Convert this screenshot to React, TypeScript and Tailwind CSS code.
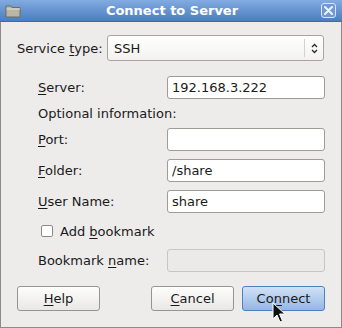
import { ReactNode } from 'react';

function Mn({ children }: { children: ReactNode }) {
  return <span className="underline underline-offset-2 decoration-1">{children}</span>;
}

function Field({ label, value, disabled }: { label: ReactNode; value?: string; disabled?: boolean }) {
  return (
    <div className="flex items-center h-[23px]">
      <div className="w-[166px] pl-[37px] whitespace-nowrap">{label}</div>
      <div
        className={`w-[158px] h-[23px] rounded-[3px] border flex items-center px-[4px] ${
          disabled ? 'bg-[#ebeae8] border-[#c8c6c2]' : 'bg-white border-[#9f9b96]'
        }`}
      >
        {value}
      </div>
    </div>
  );
}

function Btn({ children, primary, className }: { children: ReactNode; primary?: boolean; className?: string }) {
  return (
    <div
      className={`w-[83px] h-[25px] rounded-[3px] border flex items-center justify-center ${
        primary
          ? 'border-[#4d7fc1] bg-gradient-to-b from-[#d2e2f6] to-[#94b6e3]'
          : 'border-[#979591] bg-gradient-to-b from-[#fdfdfc] to-[#e9e8e6]'
      } ${className ?? ''}`}
    >
      {children}
    </div>
  );
}

export default function App() {
  return (
    <div className="relative w-[342px] h-[328px] bg-[#edeceb] text-[13px] text-[#1a1a1a] font-['DejaVu_Sans',sans-serif] leading-none select-none">
      {/* Title bar */}
      <div className="h-[22px] bg-gradient-to-b from-[#82abe0] to-[#4b7dc0] border-b border-[#3f6ca8] flex items-center pl-[5px] pr-[6px]">
        <svg width="16" height="14" viewBox="0 0 16 14" className="shrink-0">
          <path d="M1 2h5l1 1.5h8v9.5H1z" fill="#b9b6a6" stroke="#6f6c60" strokeWidth="1" />
          <path d="M1.5 5h13.5" stroke="#e0ddd0" strokeWidth="1" />
        </svg>
        <div className="flex-1 text-center text-white font-bold text-[13px] pl-[2px]">Connect to Server</div>
        <div className="w-[15px] h-[15px] rounded-[3px] border border-[#d8e6f7] bg-[#6f9ad3] flex items-center justify-center">
          <svg width="9" height="9" viewBox="0 0 9 9">
            <path d="M1 1l7 7M8 1L1 8" stroke="#eef4fc" strokeWidth="2" strokeLinecap="round" />
          </svg>
        </div>
      </div>

      <div className="border-x border-b border-[#8c8b88] h-[306px] flex flex-col">
        {/* Service type */}
        <div className="flex items-center mt-[13px] h-[26px]">
          <div className="w-[106px] pl-[16px] whitespace-nowrap">
            Service <Mn>t</Mn>ype:
          </div>
          <div className="w-[217px] h-[26px] rounded-[3px] border border-[#a8a5a0] bg-gradient-to-b from-[#ffffff] to-[#f3f2f0] flex items-center">
            <div className="flex-1 pl-[6px]">SSH</div>
            <div className="w-px h-[18px] bg-[#d3d1cd]" />
            <div className="w-[18px] flex justify-center">
              <svg width="7" height="11" viewBox="0 0 7 11">
                <path d="M1 4l2.5-2.5L6 4M1 7l2.5 2.5L6 7" fill="none" stroke="#2a2a2a" strokeWidth="1.3" />
              </svg>
            </div>
          </div>
        </div>

        <div className="mt-[15px] flex flex-col">
          <Field label={<><Mn>S</Mn>erver:</>} value="192.168.3.222" />
          <div className="h-[29px] flex items-center pl-[37px]">Optional information:</div>
          <div className="flex flex-col gap-[8px]">
            <Field label={<><Mn>P</Mn>ort:</>} value="" />
            <Field label={<><Mn>F</Mn>older:</>} value="/share" />
            <Field label={<><Mn>U</Mn>ser Name:</>} value="share" />
          </div>
          <div className="h-[36px] flex items-center pl-[40px]">
            <div className="w-[12px] h-[12px] rounded-[2px] border border-[#8e8b86] bg-white" />
            <div className="pl-[7px]">
              Add <Mn>b</Mn>ookmark
            </div>
          </div>
          <Field label={<>Bookmark <Mn>n</Mn>ame:</>} disabled />
        </div>

        <div className="flex mt-[14px] pl-[16px]">
          <Btn>
            <Mn>H</Mn>elp
          </Btn>
          <Btn className="ml-[51px]">
            <Mn>C</Mn>ancel
          </Btn>
          <Btn primary className="ml-[8px]">
            Co<Mn>n</Mn>nect
          </Btn>
        </div>
      </div>

      {/* mouse pointer */}
      <svg width="14" height="22" viewBox="0 0 14 22" className="absolute left-[272px] top-[302px]">
        <path d="M1 1v16l4-4 3 7 2.5-1-3-7h5.5z" fill="#111" stroke="#fff" strokeWidth="1" />
      </svg>
    </div>
  );
}
